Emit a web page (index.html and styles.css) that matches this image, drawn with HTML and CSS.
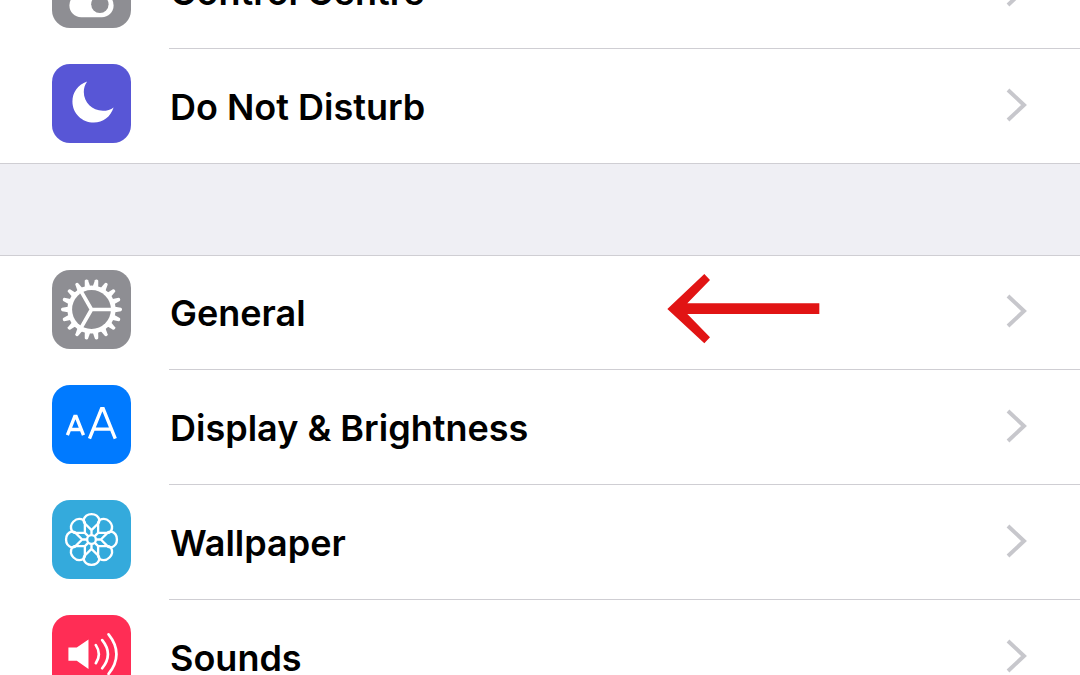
FILE: index.html
```html
<!DOCTYPE html>
<html lang="en">
<head>
  <meta charset="UTF-8" />
  <meta name="viewport" content="width=device-width, initial-scale=1.0" />
  <title>Settings</title>
  <link rel="stylesheet" href="styles.css">
</head>
<body>

<svg class="defs" aria-hidden="true">
  <symbol id="chevron" viewBox="0 0 22 35">
    <path d="M2 2 L18 17 L2 32" fill="none" stroke="currentColor" stroke-width="4" />
  </symbol>
  <path id="teeth" d="M-8 -70 L-5 -88 Q-4 -91 0 -91 Q4 -91 5 -88 L8 -70 V70 L5 88 Q4 91 0 91 Q-4 91 -5 88 L-8 70 Z" />
  <path id="petal" d="M0 -13 V-28 L-22 -50 L-24 -58 A25 25 0 0 1 24 -58 L22 -50 L0 -28" />
</svg>

<main class="settings">
  <ul class="group group-top">
    <li>
      <a class="row" href="#">
        <svg class="icon grey" viewBox="36 28 236 236" aria-hidden="true">
          <rect x="92" y="72" width="124" height="60" rx="30" fill="none" stroke="#fff" stroke-width="8" />
          <rect x="88" y="161" width="132" height="71" rx="35" fill="#fff" />
          <circle cx="179" cy="193" r="26" fill="#8e8e93" />
        </svg>
        <span class="label">Control Centre</span>
        <svg class="chevron" aria-hidden="true"><use href="#chevron" /></svg>
      </a>
    </li>
    <li>
      <a class="row" href="#">
        <svg class="icon purple" viewBox="36 28 236 236" aria-hidden="true">
          <path d="M141 80 C112 90 97 113 97 140 C97 176 126 203 161 203 C188 203 211 186 220 158 C212 165 200 168 188 168 C156 168 131 143 131 112 C131 100 134 89 141 80 Z" fill="#fff" />
        </svg>
        <span class="label">Do Not Disturb</span>
        <svg class="chevron" aria-hidden="true"><use href="#chevron" /></svg>
      </a>
    </li>
  </ul>

  <ul class="group">
    <li>
      <a class="row" href="#">
        <svg class="icon grey" viewBox="36 30 236 236" aria-hidden="true">
          <g transform="translate(154 148)" fill="#fff">
            <use href="#teeth" transform="rotate(10)" />
            <use href="#teeth" transform="rotate(30)" />
            <use href="#teeth" transform="rotate(50)" />
            <use href="#teeth" transform="rotate(70)" />
            <use href="#teeth" transform="rotate(90)" />
            <use href="#teeth" transform="rotate(110)" />
            <use href="#teeth" transform="rotate(130)" />
            <use href="#teeth" transform="rotate(150)" />
            <use href="#teeth" transform="rotate(170)" />
            <circle r="72" />
            <circle r="58" fill="#8e8e93" />
            <path d="M0 0 H62 M0 0 L-31 -54 M0 0 L-31 54" fill="none" stroke="#fff" stroke-width="11" />
          </g>
        </svg>
        <span class="label">General</span>
        <svg class="chevron" aria-hidden="true"><use href="#chevron" /></svg>
      </a>
      <svg class="pointer" viewBox="51 42 459 210" aria-hidden="true">
        <path d="M52 147 L163 42 L180 60 L112 130 H508 V162 H112 L180 232 L163 250 Z" fill="#e11414" />
      </svg>
    </li>
    <li>
      <a class="row" href="#">
        <svg class="icon blue" viewBox="36 30 236 236" aria-hidden="true">
          <path d="M82 180 L104 124 H108 L130 180 M89 163 H123" fill="none" stroke="#fff" stroke-width="10" />
          <path d="M148 190 L184 101 H189 L225 190 M159 162 H214" fill="none" stroke="#fff" stroke-width="10" />
        </svg>
        <span class="label">Display &amp; Brightness</span>
        <svg class="chevron" aria-hidden="true"><use href="#chevron" /></svg>
      </a>
    </li>
    <li>
      <a class="row" href="#">
        <svg class="icon cyan" viewBox="36 30 236 236" aria-hidden="true">
          <g transform="translate(154 148)" fill="none" stroke="#fff" stroke-width="7" stroke-linejoin="round">
            <use href="#petal" />
            <use href="#petal" transform="rotate(45)" />
            <use href="#petal" transform="rotate(90)" />
            <use href="#petal" transform="rotate(135)" />
            <use href="#petal" transform="rotate(180)" />
            <use href="#petal" transform="rotate(225)" />
            <use href="#petal" transform="rotate(270)" />
            <use href="#petal" transform="rotate(315)" />
            <circle r="13" />
          </g>
        </svg>
        <span class="label">Wallpaper</span>
        <svg class="chevron" aria-hidden="true"><use href="#chevron" /></svg>
      </a>
    </li>
    <li>
      <a class="row" href="#">
        <svg class="icon red" viewBox="36 45 236 236" aria-hidden="true">
          <path d="M85 142 H110 L145 118 V206 L110 182 H85 Z" fill="#fff" />
          <path d="M167 135 Q185 162 167 189 M186 120 Q220 162 186 204 M205 103 Q252 162 205 221" fill="none" stroke="#fff" stroke-width="8" stroke-linecap="round" />
        </svg>
        <span class="label">Sounds</span>
        <svg class="chevron" aria-hidden="true"><use href="#chevron" /></svg>
      </a>
    </li>
  </ul>
</main>

</body>
</html>
```
FILE: styles.css
```css
:root {
  --bg: #efeff4;
  --card-bg: #ffffff;
  --line: #cfced3;
  --chevron: #c7c7cc;
  --text-main: #000000;
}

* {
  margin: 0;
  padding: 0;
  box-sizing: border-box;
}

html {
  height: 100%;
  overflow: hidden;
}

body {
  height: 100%;
  overflow: hidden;
  font-family: Inter, "Liberation Sans", sans-serif;
  background: var(--bg);
  color: var(--text-main);
}

a {
  color: inherit;
  text-decoration: none;
}

.defs {
  display: none;
}

.settings {
  display: flex;
  flex-direction: column;
  gap: 91px;
}

.group {
  list-style: none;
  background: var(--card-bg);
  box-shadow: inset 0 1px 0 var(--line), inset 0 -1px 0 var(--line);
}

/* list is scrolled part way down */
.group-top {
  margin-top: -66px;
}

.group li {
  position: relative;
}

.row {
  height: 115px;
  padding: 0 52px;
  display: flex;
  align-items: center;
}

/* separator starts level with the labels */
.group li:not(:last-child)::after {
  content: '';
  position: absolute;
  left: 169px;
  right: 0;
  bottom: 0;
  height: 1px;
  background: var(--line);
}

.icon {
  width: 79px;
  height: 79px;
  margin: 0 39px 6px 0;
  border-radius: 18px;
}

.grey { background: #8e8e93; }
.purple { background: #5856d6; }
.blue { background: #007aff; }
.cyan { background: #34aadc; }
.red { background: #ff2d55; }

.label {
  flex: 1;
  font-size: 36px;
  font-weight: 600;
  line-height: 44px;
}

.chevron {
  width: 22px;
  height: 35px;
  margin-bottom: 3px;
  color: var(--chevron);
}

.pointer {
  position: absolute;
  top: 19px;
  right: 260px;
  width: 153px;
  height: 70px;
}
```
